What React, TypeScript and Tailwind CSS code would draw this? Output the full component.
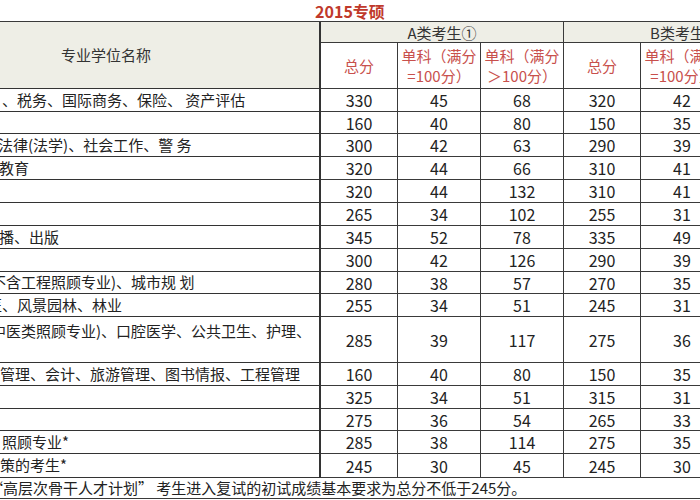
import React from "react";

type Row = {
  name: string;
  pl: string;
  h: string;
  a: [number, number, number];
  b: [number, number, number];
  top?: boolean;
};

const rows: Row[] = [
  { name: "、税务、国际商务、保险、 资产评估", pl: "pl-[109px]", h: "h-[23px]", a: [330, 45, 68], b: [320, 42, 63] },
  { name: "", pl: "pl-[109px]", h: "h-[22px]", a: [160, 40, 80], b: [150, 35, 70] },
  { name: "法律(法学)、社会工作、警 务", pl: "pl-[105px]", h: "h-[23px]", a: [300, 42, 63], b: [290, 39, 59] },
  { name: "教育", pl: "pl-[106px]", h: "h-[23px]", a: [320, 44, 66], b: [310, 41, 62] },
  { name: "", pl: "pl-[109px]", h: "h-[23px]", a: [320, 44, 132], b: [310, 41, 123] },
  { name: "", pl: "pl-[109px]", h: "h-[23px]", a: [265, 34, 102], b: [255, 31, 93] },
  { name: "播、出版", pl: "pl-[106px]", h: "h-[23px]", a: [345, 52, 78], b: [335, 49, 74] },
  { name: "", pl: "pl-[109px]", h: "h-[23px]", a: [300, 42, 126], b: [290, 39, 117] },
  { name: "不含工程照顾专业)、城市规 划", pl: "pl-[98px]", h: "h-[22px]", a: [280, 38, 57], b: [270, 35, 53] },
  { name: "医、风景园林、林业", pl: "pl-[94px]", h: "h-[23px]", a: [255, 34, 51], b: [245, 31, 47] },
  { name: "中医类照顾专业)、口腔医学、公共卫生、护理、", pl: "pl-[98px]", h: "h-[46px]", a: [285, 39, 117], b: [275, 36, 108], top: true },
  { name: "管理、会计、旅游管理、图书情报、工程管理", pl: "pl-[107px]", h: "h-[23px]", a: [160, 40, 80], b: [150, 35, 70] },
  { name: "", pl: "pl-[109px]", h: "h-[23px]", a: [325, 34, 51], b: [315, 31, 47] },
  { name: "", pl: "pl-[109px]", h: "h-[22px]", a: [275, 36, 54], b: [265, 33, 50] },
  { name: "照顾专业*", pl: "pl-[109px]", h: "h-[23px]", a: [285, 38, 114], b: [275, 35, 105] },
  { name: "策的考生*", pl: "pl-[107px]", h: "h-[24px]", a: [245, 30, 45], b: [245, 30, 45] },
];

const widths = ["w-[77px]", "w-[83px]", "w-[83px]", "w-[77px]", "w-[83px]", "w-[83px]"];

function NumCell({ w, v }: { w: string; v: number }) {
  return (
    <div className={`${w} shrink-0 h-full border-r border-b border-[#3a3a3a] flex items-center justify-center text-[16px] text-[#222]`}>
      {v}
    </div>
  );
}

function SubHead({ w, lines }: { w: string; lines: string[] }) {
  return (
    <div className={`${w} shrink-0 h-full border-r border-b border-[#3a3a3a] bg-white flex flex-col items-center justify-center text-[15px] leading-[20px] text-[#c8504c] whitespace-nowrap`}>
      {lines.map((l, i) => (
        <div key={i}>{l}</div>
      ))}
    </div>
  );
}

export default function App() {
  return (
    <div className="w-[700px] h-[500px] overflow-hidden bg-white font-['Noto_Sans_CJK_SC','Noto_Sans',sans-serif]">
      <div className="h-[21px] flex items-center justify-center text-[16px] font-bold text-[#c0392b] leading-none">
        2015专硕
      </div>
      <div className="-ml-[107px] w-[914px] border-t border-[#3a3a3a]">
        {/* header */}
        <div className="flex h-[67px]">
          <div className="w-[428px] shrink-0 h-full border-r-2 border-b border-[#333] bg-[#eeeee6] flex items-center justify-center text-[15px] text-[#333]">
            专业学位名称
          </div>
          <div className="flex flex-col w-[486px] shrink-0">
            <div className="flex h-[21px]">
              <div className="w-[243px] shrink-0 h-full border-r border-b border-[#3a3a3a] bg-[#eeeee6] flex items-center justify-center text-[15px] text-[#333] leading-none">
                A类考生①
              </div>
              <div className="w-[243px] shrink-0 h-full border-r border-b border-[#3a3a3a] bg-[#eeeee6] flex items-center justify-center text-[15px] text-[#333] leading-none">
                B类考生①
              </div>
            </div>
            <div className="flex h-[46px]">
              <SubHead w={widths[0]} lines={["总分"]} />
              <SubHead w={widths[1]} lines={["单科（满分", "=100分）"]} />
              <SubHead w={widths[2]} lines={["单科（满分", "＞100分）"]} />
              <SubHead w={widths[3]} lines={["总分"]} />
              <SubHead w={widths[4]} lines={["单科（满分", "=100分）"]} />
              <SubHead w={widths[5]} lines={["单科（满分", "＞100分）"]} />
            </div>
          </div>
        </div>
        {/* data rows */}
        {rows.map((r, i) => (
          <div key={i} className={`flex ${r.h}`}>
            <div
              className={`w-[428px] shrink-0 h-full border-r-2 border-b border-[#333] overflow-hidden whitespace-nowrap text-[15px] text-[#222] flex ${
                r.top ? "items-start pt-[3px]" : "items-center"
              } ${r.pl}`}
            >
              {r.name}
            </div>
            {[...r.a, ...r.b].map((v, j) => (
              <NumCell key={j} w={widths[j]} v={v} />
            ))}
          </div>
        ))}
        {/* footnote */}
        <div className="h-[21px] w-[914px] border-b border-[#3a3a3a] flex items-center pl-[95px] whitespace-nowrap overflow-hidden text-[15px] text-[#222]">
          “高层次骨干人才计划” 考生进入复试的初试成绩基本要求为总分不低于245分。
        </div>
      </div>
    </div>
  );
}
